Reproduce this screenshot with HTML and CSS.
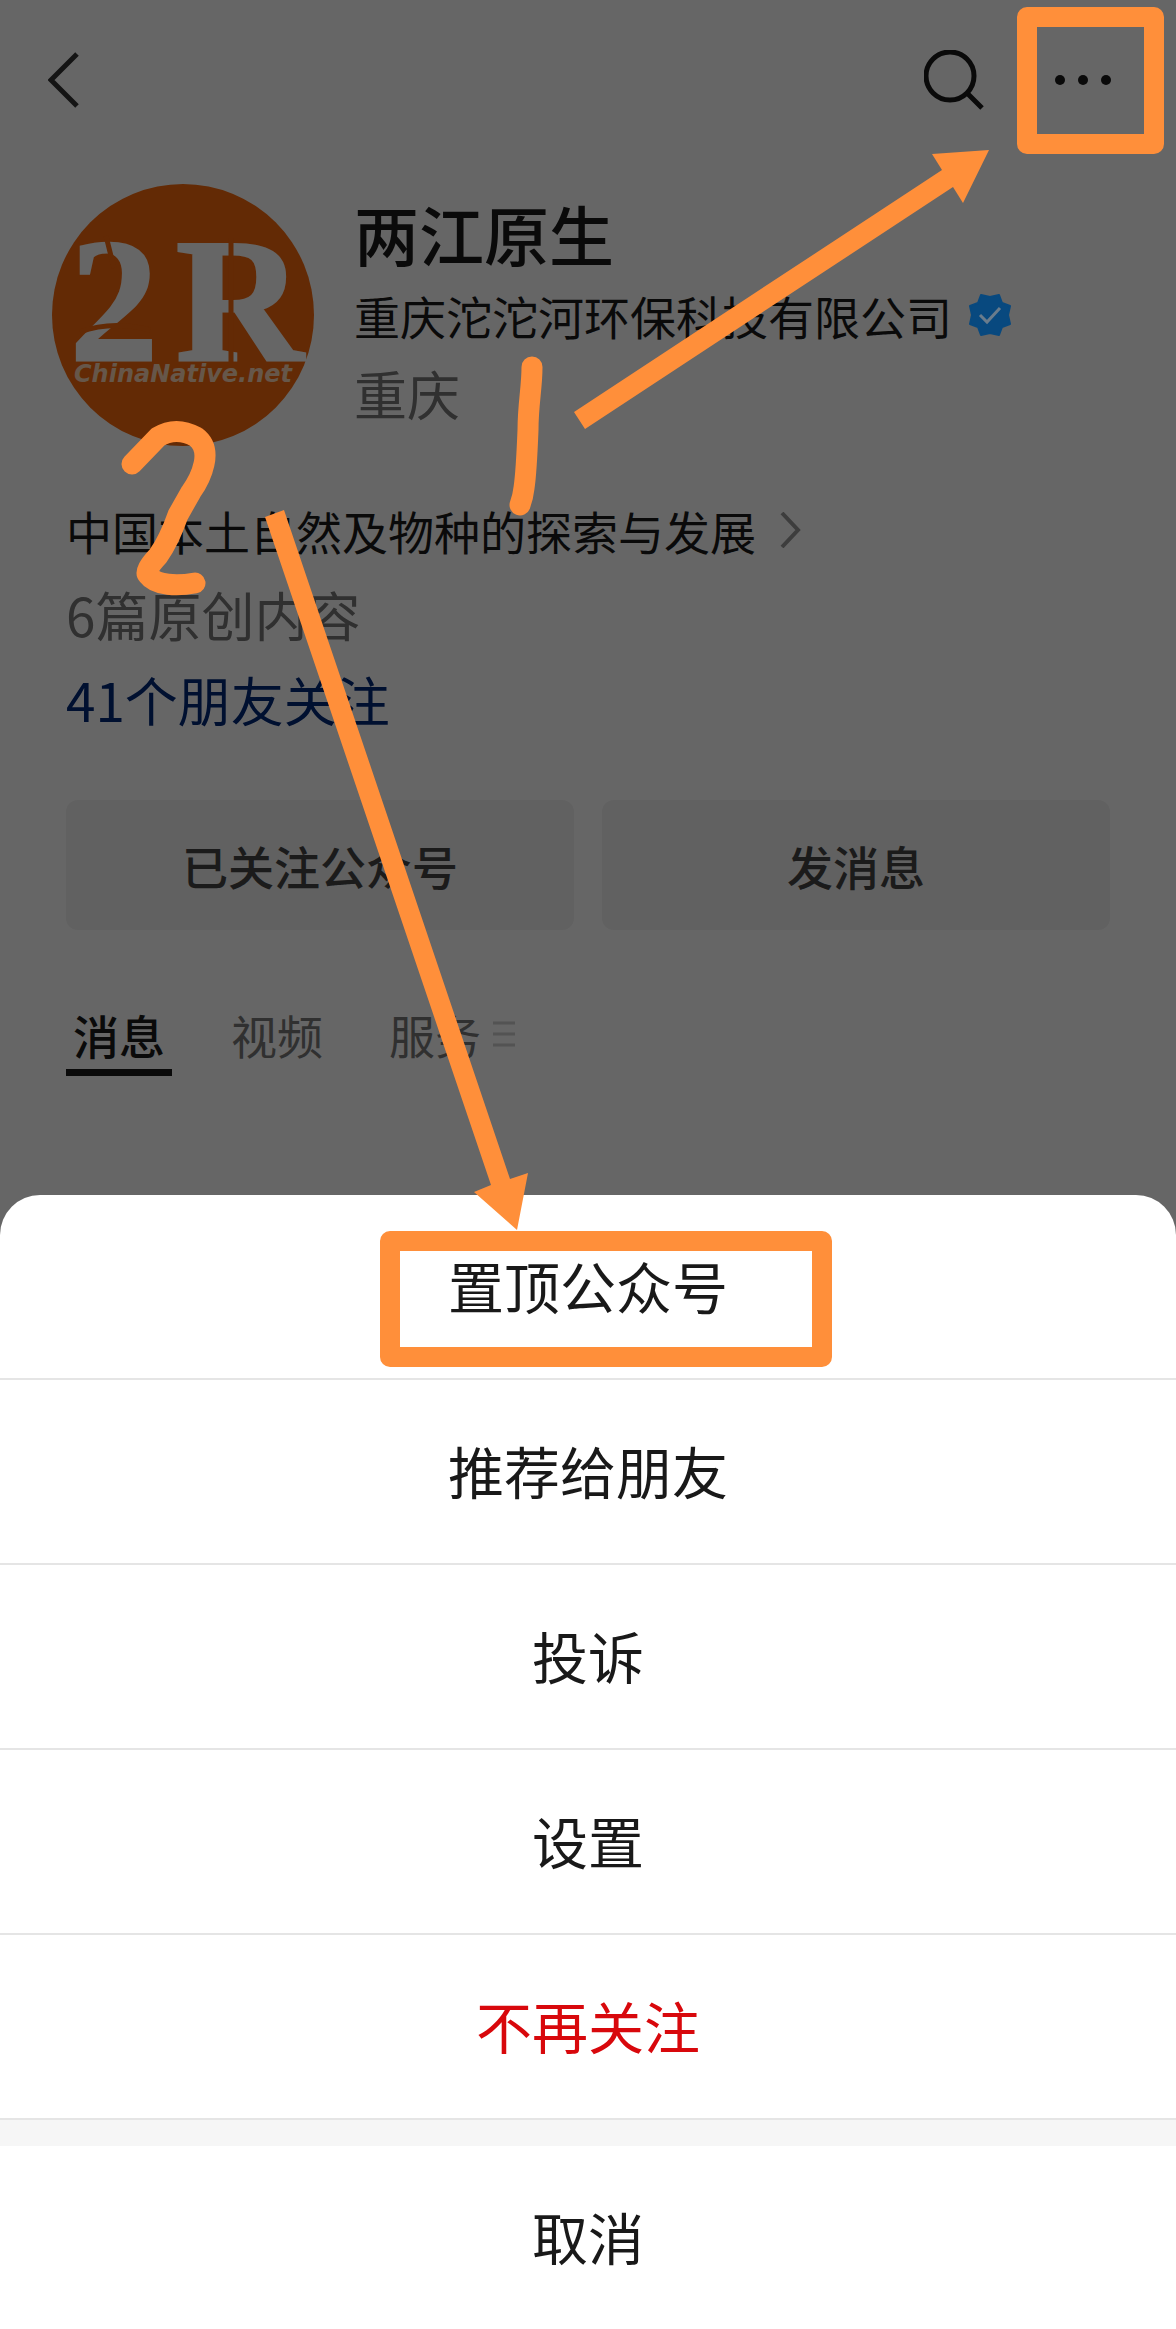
FILE: index.html
```html
<!DOCTYPE html>
<html lang="zh-CN">
<head>
<meta charset="utf-8">
<meta name="viewport" content="width=device-width, initial-scale=1">
<title>两江原生</title>
<link rel="stylesheet" href="styles.css">
</head>
<body>
<main class="profile">
  <header class="topbar">
    <button class="icon-button" type="button" aria-label="返回">
      <svg width="32" height="56" viewBox="0 0 32 56"><path d="M29 2 L3 28 L29 54" fill="none" stroke="#333" stroke-width="5"/></svg>
    </button>
    <div class="topbar-actions">
      <button class="icon-button" type="button" aria-label="搜索">
        <svg width="60" height="60" viewBox="0 0 60 60" fill="none" stroke="#191919" stroke-width="5"><circle cx="26" cy="26" r="24"/><path d="M44 44 L58 58"/></svg>
      </button>
      <button class="icon-button" type="button" aria-label="更多">
        <svg width="56" height="10" viewBox="0 0 56 10" fill="#191919"><circle cx="5" cy="5" r="5"/><circle cx="28" cy="5" r="5"/><circle cx="51" cy="5" r="5"/></svg>
      </button>
    </div>
  </header>

  <section class="account">
    <svg class="avatar" viewBox="0 0 262 262" role="img" aria-label="2R ChinaNative.net">
      <circle cx="131" cy="131" r="131" fill="#f7690d"/>
      <g class="avatar-mark">
        <text x="18" y="176">2</text>
        <text x="124" y="176">R</text>
      </g>
      <path d="M54 52 L62 84 M28 148 Q60 136 98 146 M179 54 V178" fill="none" stroke="#f7690d" stroke-width="5"/>
      <text class="avatar-site" x="22" y="198">ChinaNative.net</text>
    </svg>
    <div class="account-text">
      <h1 class="account-name">两江原生</h1>
      <p class="company">重庆沱沱河环保科技有限公司
        <svg class="badge" width="44" height="44" viewBox="0 0 44 44" role="img" aria-label="已认证"><path d="M22 4 L31 2 L34 10 L42 13 L40 22 L42 31 L34 34 L31 42 L22 40 L13 42 L10 34 L2 31 L4 22 L2 13 L10 10 L13 2 Z" fill="#08497f" stroke="#08497f" stroke-width="2" stroke-linejoin="round"/><path d="M12 22 L19 29 L32 15" fill="none" stroke="#6a7c8c" stroke-width="3"/></svg>
      </p>
      <p class="secondary">重庆</p>
    </div>
  </section>

  <section class="details">
    <a class="intro" href="#">中国本土自然及物种的探索与发展
      <svg width="22" height="36" viewBox="0 0 22 36"><path d="M2 1 L18 18 L2 35" fill="none" stroke="#999" stroke-width="4"/></svg>
    </a>
    <p class="secondary">6篇原创内容</p>
    <a class="friends" href="#">41个朋友关注</a>
  </section>

  <div class="actions">
    <button class="action" type="button">已关注公众号</button>
    <button class="action" type="button">发消息</button>
  </div>

  <nav class="tabs">
    <a class="tab tab-active" href="#">消息</a>
    <a class="tab" href="#">视频</a>
    <a class="tab" href="#">服务
      <svg width="22" height="26" viewBox="0 0 22 26"><path d="M0 2 H22 M0 13 H22 M0 24 H22" stroke="#cfcfcf" stroke-width="3"/></svg>
    </a>
  </nav>
</main>

<div class="sheet" role="dialog" aria-label="更多操作">
  <button class="sheet-item" type="button">置顶公众号</button>
  <button class="sheet-item" type="button">推荐给朋友</button>
  <button class="sheet-item" type="button">投诉</button>
  <button class="sheet-item" type="button">设置</button>
  <button class="sheet-item sheet-danger" type="button">不再关注</button>
  <button class="sheet-item sheet-cancel" type="button">取消</button>
</div>

<!-- hand-drawn steps over the screen -->
<svg class="marks" width="1176" height="1400" viewBox="0 0 1176 1400" aria-hidden="true">
  <g fill="none" stroke="#ff8f3a" stroke-width="20" stroke-linejoin="round">
    <rect x="1027" y="17" width="127" height="127"/>
    <rect x="390" y="1241" width="432" height="116"/>
    <g stroke-width="21" stroke-linecap="round">
      <path d="M532 367 C532 388 528 404 528 430 C527 455 526 475 524 488 Q523 497 520 505"/>
      <path d="M132 464 L158 437 Q176 426 196 437 Q208 446 204 464 Q201 478 191 492 L178 515 C172 532 166 545 158 556 Q144 571 148 575 C156 586 178 586 195 583"/>
    </g>
  </g>
  <g fill="#ff8f3a">
    <path d="M574 412 L942 170 L932 154 L989 150 L963 203 L953 187 L585 429 Z"/>
    <path d="M265 517 L284 510 L510 1179 L528 1173 L517 1230 L474 1192 L491 1185 Z"/>
  </g>
</svg>
</body>
</html>
```
FILE: styles.css
```css
* {
  box-sizing: border-box;
}

body {
  position: relative;
  display: flex;
  flex-direction: column;
  min-height: 100vh;
  margin: 0;
  background: #fff;
  color: #191919;
  font-family: "Noto Sans CJK SC", sans-serif;
  font-size: 46px;
  line-height: 60px;
}

h1,
p {
  margin: 0;
}

a {
  color: inherit;
  text-decoration: none;
}

button {
  border: 0;
  padding: 0;
  background: none;
  color: inherit;
  font: inherit;
}

svg {
  display: block;
  flex: none;
}

.profile {
  position: relative;
  flex: 1;
  padding-bottom: 150px;
}

/* dimmed backdrop behind the sheet */
.profile::after {
  content: "";
  position: absolute;
  inset: 0;
  background: rgba(0, 0, 0, 0.6);
}

.topbar {
  display: flex;
  align-items: center;
  justify-content: space-between;
  height: 160px;
  padding: 0 65px 0 48px;
}

.icon-button {
  display: flex;
}

.topbar-actions {
  display: flex;
  align-items: center;
  gap: 71px;
}

.account {
  display: flex;
  gap: 40px;
  padding: 24px 52px 0;
}

.avatar {
  width: 262px;
  height: 262px;
}

.avatar-mark {
  fill: #fff;
  stroke: #fff;
  stroke-width: 3px;
  font: bold 176px "Liberation Serif", serif;
}

.avatar-site {
  fill: #ffd9b8;
  font: italic bold 24px "DejaVu Sans", sans-serif;
}

.account-text {
  display: flex;
  flex-direction: column;
  gap: 8px;
  padding-top: 10px;
}

.account-name {
  font-size: 65px;
  font-weight: 500;
  line-height: 78px;
}

.company,
.intro {
  display: flex;
  align-items: center;
}

.company {
  gap: 16px;
  height: 70px;
}

/* keeps its own colours above the backdrop */
.badge {
  position: relative;
  z-index: 1;
}

.secondary {
  color: #787878;
  font-size: 53px;
  line-height: 70px;
}

.details {
  display: flex;
  flex-direction: column;
  align-items: flex-start;
  gap: 15px;
  padding: 54px 66px 0;
}

.intro {
  gap: 24px;
  padding-bottom: 4px;
}

.friends {
  color: #002878;
  font-size: 53px;
  line-height: 70px;
}

.actions {
  display: grid;
  grid-template-columns: 1fr 1fr;
  gap: 28px;
  padding: 66px 66px 0;
}

.action {
  height: 130px;
  border-radius: 12px;
  background: #f2f2f2;
  color: #444;
  font-weight: 500;
}

.tabs {
  display: flex;
  gap: 52px;
  padding: 70px 66px 0;
}

.tab {
  display: flex;
  align-items: center;
  gap: 12px;
  height: 76px;
  padding: 0 7px 9px;
  color: #787878;
}

.tab-active {
  border-bottom: 7px solid #191919;
  padding-bottom: 2px;
  color: #191919;
  font-weight: 500;
}

.sheet {
  position: relative;
  display: flex;
  flex-direction: column;
  margin-top: -40px;
  border-radius: 40px 40px 0 0;
  background: #fff;
}

.sheet-item {
  height: 185px;
  padding-bottom: 3px;
  border-bottom: 2px solid #e5e5e5;
  font-size: 56px;
}

.sheet-danger {
  color: #d8080c;
}

.sheet-cancel {
  height: 209px;
  border-top: 26px solid #f6f6f6;
  border-bottom: 0;
}

.marks {
  position: absolute;
  top: 0;
  left: 0;
  pointer-events: none;
}
```
